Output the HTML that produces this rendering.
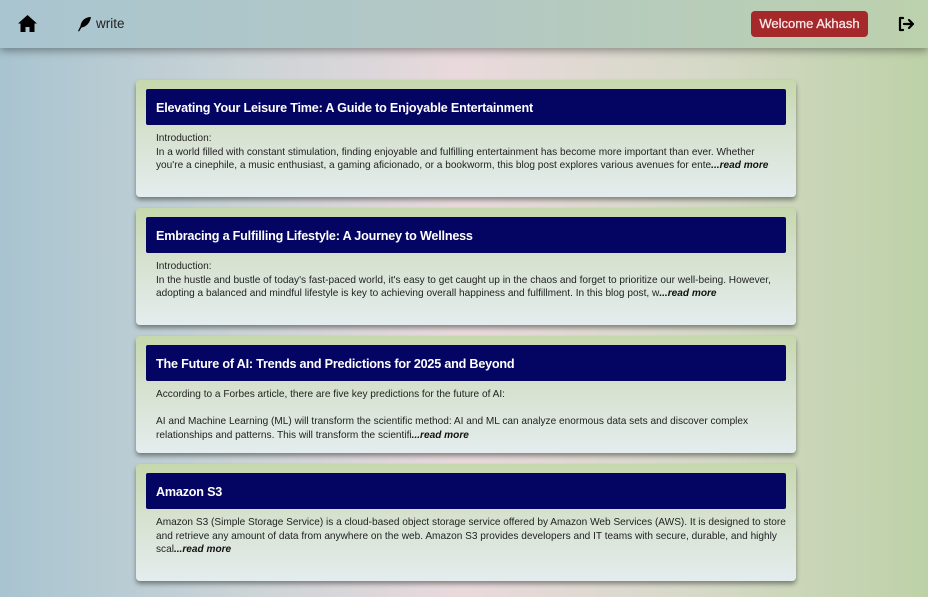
<!DOCTYPE html>
<html><head><style>
*{margin:0;padding:0;box-sizing:border-box}
body{width:928px;height:597px;overflow:hidden;font-family:"Liberation Sans",sans-serif;background:linear-gradient(90deg,#a8c4d0 0%,#c9d3d6 25%,#e9d9dc 50%,#d6d9c8 75%,#bdd1a7 100%);position:relative}
.nav{position:absolute;left:0;top:0;width:928px;height:48px;background:linear-gradient(90deg,#a9c5d0,#b3c8c4 50%,#bcd1ad);box-shadow:0 3px 8px rgba(0,0,0,.35)}
.write{position:absolute;left:96px;top:16px;font-size:13.5px;color:#222}
.btn{position:absolute;left:751px;top:11px;width:117px;height:26px;background:#a5282a;border-radius:4px;color:#f4e8e8;font-size:13px;text-align:center;line-height:25px;-webkit-text-stroke:.3px #f4e8e8}
.card{position:absolute;left:136px;width:660px;height:117px;border-radius:4px;background:linear-gradient(180deg,#c6d8ad 0%,#d5e0cc 40%,#e4edee 100%);box-shadow:0 3px 5px rgba(0,0,0,.4)}
.hd{position:absolute;left:10px;top:9px;width:640px;height:36px;background:#040563;border-radius:2px;color:#fff;font-weight:bold;font-size:12.6px;line-height:39px;padding-left:10px;letter-spacing:-.2px}
.tx{position:absolute;left:20px;top:52px;font-size:10.1px;line-height:13.5px;color:#222;white-space:nowrap}
.tx b{font-style:italic;color:#111}
</style></head><body>
<div class="nav">
<svg style="position:absolute;left:18px;top:15px" width="19" height="17" viewBox="0 0 19 17"><path d="M9.5 0L0 8.5h2.5V17h5v-5h4v5h5V8.5H19z" fill="#000"/></svg>
<svg style="position:absolute;left:77px;top:16px" width="15" height="16" viewBox="0 0 15 16"><path d="M14 1C8 1 4 5 3.5 10L1 15l1 .5 2.5-4C9 11 13 7 14 1z" fill="#000"/></svg>
<div class="write">write</div>
<div class="btn">Welcome Akhash</div>
<svg style="position:absolute;left:897px;top:16px" width="18" height="16" viewBox="0 0 18 16" fill="none" stroke="#000" stroke-width="2.2" stroke-linecap="round" stroke-linejoin="round"><path d="M6 2H3v12h3M7 8h9M12 4l4 4-4 4"/></svg>
</div>
<div class="card" style="top:80px"><div class="hd">Elevating Your Leisure Time: A Guide to Enjoyable Entertainment</div>
<div class="tx">Introduction:<br>In a world filled with constant stimulation, finding enjoyable and fulfilling entertainment has become more important than ever. Whether<br>you're a cinephile, a music enthusiast, a gaming aficionado, or a bookworm, this blog post explores various avenues for ente<b>...read more</b></div></div>
<div class="card" style="top:208px"><div class="hd">Embracing a Fulfilling Lifestyle: A Journey to Wellness</div>
<div class="tx">Introduction:<br>In the hustle and bustle of today's fast-paced world, it's easy to get caught up in the chaos and forget to prioritize our well-being. However,<br>adopting a balanced and mindful lifestyle is key to achieving overall happiness and fulfillment. In this blog post, w<b>...read more</b></div></div>
<div class="card" style="top:336px"><div class="hd">The Future of AI: Trends and Predictions for 2025 and Beyond</div>
<div class="tx">According to a Forbes article, there are five key predictions for the future of AI:<br><br>AI and Machine Learning (ML) will transform the scientific method: AI and ML can analyze enormous data sets and discover complex<br>relationships and patterns. This will transform the scientifi<b>...read more</b></div></div>
<div class="card" style="top:464px"><div class="hd">Amazon S3</div>
<div class="tx">Amazon S3 (Simple Storage Service) is a cloud-based object storage service offered by Amazon Web Services (AWS). It is designed to store<br>and retrieve any amount of data from anywhere on the web. Amazon S3 provides developers and IT teams with secure, durable, and highly<br>scal<b>...read more</b></div></div>
</body></html>
